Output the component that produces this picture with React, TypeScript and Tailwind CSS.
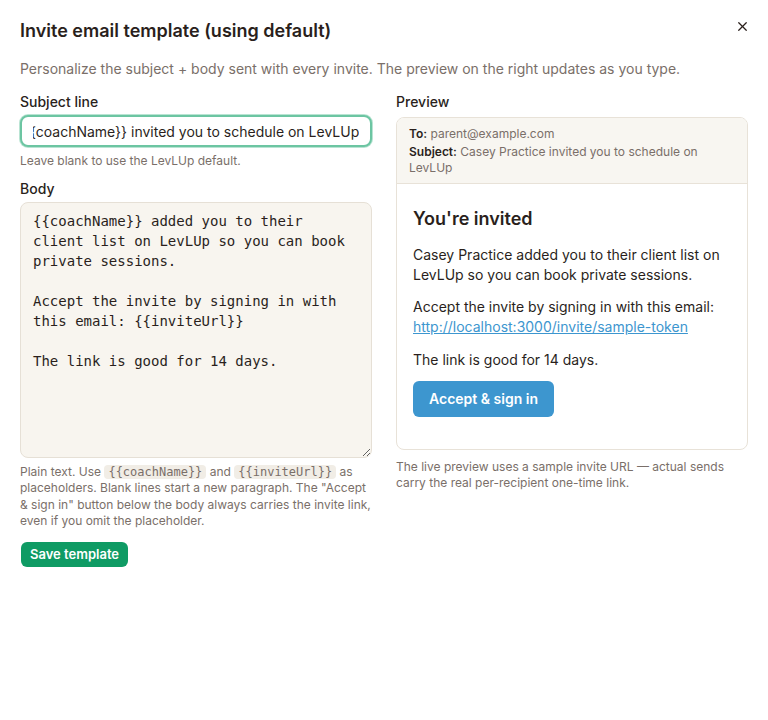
import { useEffect, useRef } from 'react';
import { X } from 'lucide-react';

const subject = '{{coachName}} invited you to schedule on LevLUp';
const body = `{{coachName}} added you to their client list on LevLUp so you can book private sessions.

Accept the invite by signing in with this email: {{inviteUrl}}

The link is good for 14 days.`;

const Code = ({ children }: { children: string }) => (
  <code className="rounded bg-[#f1ede6] px-1 py-0 font-['DejaVu_Sans_Mono',monospace] text-[12px] leading-4 text-[#7a6f69]">
    {children}
  </code>
);

export default function App() {
  const inputRef = useRef<HTMLInputElement>(null);

  // show the end of the subject, as the focused field does
  useEffect(() => {
    if (inputRef.current) inputRef.current.scrollLeft = inputRef.current.scrollWidth;
  }, []);

  return (
    <div className="min-h-[720px] w-[768px] bg-white px-5 pt-[18px] font-['Inter',sans-serif] text-[#2a1f1c]">
      {/* Header */}
      <div className="flex items-start justify-between">
        <h2 className="text-[18px] font-semibold leading-[26px]">Invite email template (using default)</h2>
        <button className="mr-[-6px] mt-[-3px] p-1 text-[#2a1f1c]" aria-label="Close">
          <X size={15} strokeWidth={2} />
        </button>
      </div>
      <p className="mt-[15px] text-[14px] leading-5 text-[#7a6f69]">
        Personalize the subject + body sent with every invite. The preview on the right updates as you type.
      </p>

      <div className="mt-[13px] grid grid-cols-2 gap-6">
        {/* Left column */}
        <div className="flex flex-col">
          <label className="text-[14px] font-medium leading-5">Subject line</label>
          <input
            ref={inputRef}
            defaultValue={subject}
            className="mt-[3px] h-[32px] w-full rounded-lg border-2 border-[#6cc5a2] bg-white px-[11px] text-[14px] text-[#2a1f1c] outline-none shadow-[0_0_0_1px_#b9e4d3]"
          />
          <p className="mt-[6px] text-[12px] leading-4 text-[#7a6f69]">Leave blank to use the LevLUp default.</p>
          <label className="mt-[10px] text-[14px] font-medium leading-5">Body</label>
          <textarea
            defaultValue={body}
            className="mt-[3px] h-[256px] w-full rounded-lg border border-[#e6e0d6] bg-[#f8f5ef] px-3 py-2 font-['DejaVu_Sans_Mono',monospace] text-[14px] leading-5 text-[#2a1f1c] outline-none"
          />
          <p className="mt-[6px] text-[12px] leading-[16.3px] text-[#7a6f69]">
            Plain text. Use <Code>{'{{coachName}}'}</Code> and <Code>{'{{inviteUrl}}'}</Code> as placeholders. Blank lines
            start a new paragraph. The "Accept &amp; sign in" button below the body always carries the invite link, even if
            you omit the placeholder.
          </p>
          <div className="mt-[12px]">
            <button className="ml-px rounded-md bg-[#0f9b64] px-[9px] py-1 text-[13px] font-semibold leading-[17px] text-white">
              Save template
            </button>
          </div>
        </div>

        {/* Right column */}
        <div className="flex flex-col">
          <span className="text-[14px] font-medium leading-5">Preview</span>
          <div className="mt-[5px] overflow-hidden rounded-lg border border-[#e8e2d8]">
            <div className="border-b border-[#e8e2d8] bg-[#f8f6f1] px-3 pb-[7px] pt-[8px] text-[12px] leading-4 text-[#7a6f69]">
              <div>
                <span className="font-semibold text-[#2a1f1c]">To:</span> parent@example.com
              </div>
              <div className="mt-[2px]">
                <span className="font-semibold text-[#2a1f1c]">Subject:</span> Casey Practice invited you to schedule on LevLUp
              </div>
            </div>
            <div className="px-4 pb-8 pt-[23px] text-[14px] leading-5">
              <h3 className="text-[18px] font-semibold leading-6">You're invited</h3>
              <p className="mt-[14px]">
                Casey Practice added you to their client list on LevLUp so you can book private sessions.
              </p>
              <p className="mt-3">
                Accept the invite by signing in with this email:{' '}
                <a href="#" className="text-[#3d96cf] underline">
                  http://localhost:3000/invite/sample-token
                </a>
              </p>
              <p className="mt-[13px]">The link is good for 14 days.</p>
              <div className="mt-[11px]">
                <button className="rounded-md bg-[#3d96cf] px-4 py-[8px] text-[14px] font-semibold leading-5 text-white">
                  Accept &amp; sign in
                </button>
              </div>
            </div>
          </div>
          <p className="mt-[9px] text-[12px] leading-4 text-[#7a6f69]">
            The live preview uses a sample invite URL — actual sends carry the real per-recipient one-time link.
          </p>
        </div>
      </div>
    </div>
  );
}
